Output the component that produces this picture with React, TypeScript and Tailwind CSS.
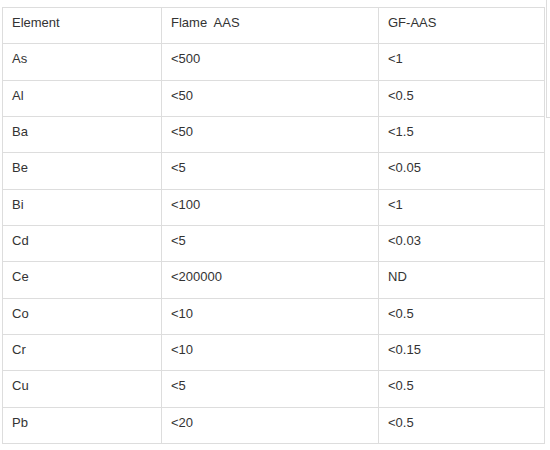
const rows: [string, string, string][] = [
  ["As", "<500", "<1"],
  ["Al", "<50", "<0.5"],
  ["Ba", "<50", "<1.5"],
  ["Be", "<5", "<0.05"],
  ["Bi", "<100", "<1"],
  ["Cd", "<5", "<0.03"],
  ["Ce", "<200000", "ND"],
  ["Co", "<10", "<0.5"],
  ["Cr", "<10", "<0.15"],
  ["Cu", "<5", "<0.5"],
  ["Pb", "<20", "<0.5"],
];

const cell = "border border-[#dddddd] pl-[9px] pr-2 pt-[5px] pb-[11px] align-top leading-[19.33px]";

export default function App() {
  return (
    <div className="flex items-start w-[550px] h-[450px] bg-white text-[13px] text-[#333333] font-['Liberation_Sans',Arial,sans-serif]">
      <table className="ml-[2px] mt-[7px] w-[543px] border-collapse table-fixed">
        <colgroup>
          <col className="w-[159px]" />
          <col className="w-[217px]" />
          <col />
        </colgroup>
        <thead>
          <tr>
            <th className={cell + " text-left font-normal"}>Element</th>
            <th className={cell + " text-left font-normal"}>Flame&nbsp; AAS</th>
            <th className={cell + " text-left font-normal"}>GF-AAS</th>
          </tr>
        </thead>
        <tbody>
          {rows.map(([el, flame, gf]) => (
            <tr key={el}>
              <td className={cell}>{el}</td>
              <td className={cell}>{flame}</td>
              <td className={cell}>{gf}</td>
            </tr>
          ))}
        </tbody>
      </table>

      {/* scroll track edge */}
      <div className="ml-[1px] w-[4px] h-[118px] border-l border-b border-[#dddddd]" />
    </div>
  );
}
